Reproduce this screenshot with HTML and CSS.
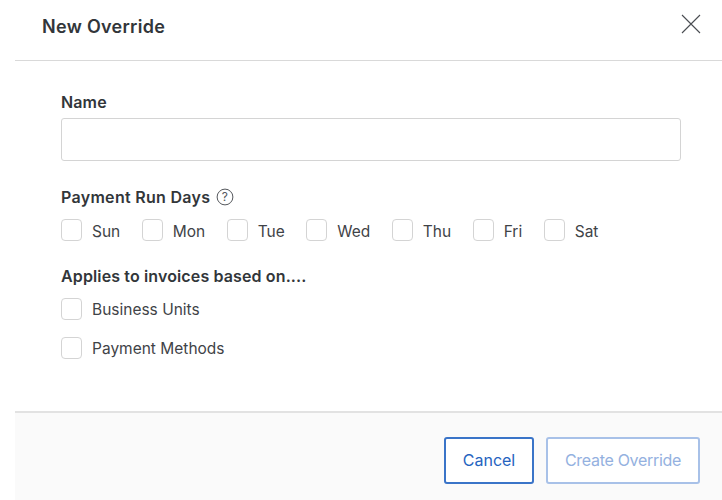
FILE: index.html
```html
<!DOCTYPE html>
<html lang="en">
<head>
<meta charset="utf-8">
<title>New Override</title>
<link rel="stylesheet" href="styles.css">
</head>
<body>
<div class="modal">
  <header class="head">
    <h1 class="title">New Override</h1>
    <svg class="close" width="20" height="20" viewBox="0 0 20 20"><path d="M1 1L19 19M19 1L1 19" stroke="#4a4d52" stroke-width="1.1" fill="none"/></svg>
  </header>
  <main class="body">
    <label class="label name-label">Name</label>
    <input class="input" type="text">
    <div class="label days-label">Payment Run Days
      <svg class="help" width="18" height="18" viewBox="0 0 18 18"><circle cx="9" cy="9" r="7.9" stroke="#55585d" fill="none"/><text x="9" y="13" text-anchor="middle" class="help-q">?</text></svg>
    </div>
    <div class="days">
      <div class="check"><span class="box"></span><span class="text">Sun</span></div>
      <div class="check"><span class="box"></span><span class="text">Mon</span></div>
      <div class="check"><span class="box"></span><span class="text">Tue</span></div>
      <div class="check"><span class="box"></span><span class="text">Wed</span></div>
      <div class="check"><span class="box"></span><span class="text">Thu</span></div>
      <div class="check"><span class="box"></span><span class="text">Fri</span></div>
      <div class="check"><span class="box"></span><span class="text">Sat</span></div>
    </div>
    <div class="label applies-label">Applies to invoices based on....</div>
    <div class="stack">
      <div class="check"><span class="box"></span><span class="text">Business Units</span></div>
      <div class="check"><span class="box"></span><span class="text">Payment Methods</span></div>
    </div>
  </main>
  <footer class="foot">
    <button class="btn cancel">Cancel</button>
    <button class="btn create">Create Override</button>
  </footer>
</div>
</body>
</html>
```
FILE: styles.css
```css
* { box-sizing: border-box; }
html, body { margin: 0; height: 100%; background: #fff; }
body { font-family: Inter, "Liberation Sans", sans-serif; color: #32363a; overflow: hidden; }
.modal { margin-left: 15px; height: 500px; display: flex; flex-direction: column; }
.head { height: 61px; border-bottom: 1px solid #d9d9d9; display: flex; align-items: flex-start; justify-content: space-between; padding: 14px 21px 0 27px; }
.title { margin: 1px 0 0; font-size: 18px; font-weight: 600; line-height: 24px; letter-spacing: 0.3px; }
.body { flex: 1; padding: 31px 41px 0 46px; display: flex; flex-direction: column; align-items: flex-start; }
.label { font-size: 16px; font-weight: 600; line-height: 20px; letter-spacing: 0.13px; }
.input { display: block; width: 620px; height: 43px; margin-top: 6px; border: 1px solid #d4d4d4; border-radius: 3px; background: #fff; }
.days-label { margin-top: 26px; display: flex; align-items: center; gap: 6px; letter-spacing: 0.3px; }
.help-q { font: 400 12px Inter, sans-serif; fill: #55585d; }
.days { display: flex; gap: 21.5px; margin-top: 12px; }
.check { display: flex; align-items: flex-start; gap: 10px; font-size: 15.5px; line-height: 22px; color: #3f4347; }
.days .text { margin-top: 2px; }
.stack .text { margin-top: 1px; }
.box { width: 21px; height: 22px; border: 1px solid #d4d4d4; border-radius: 4px; background: #fff; flex: none; }
.applies-label { margin-top: 23px; }
.stack { display: flex; flex-direction: column; gap: 16px; margin-top: 12px; }
.foot { height: 89px; border-top: 2px solid #e2e2e2; background: #fafafa; display: flex; justify-content: flex-end; align-items: flex-start; gap: 12px; padding: 24px 22px 0 0; }
.btn { height: 47px; font: 400 16px Inter, sans-serif; background: #fff; border-radius: 3px; padding: 0 0 2px; }
.cancel { width: 90px; color: #2563c0; border: 2px solid #3a74c8; }
.create { width: 154px; color: #94b1e0; border: 2px solid #a8c1e8; letter-spacing: -0.3px; }
```
